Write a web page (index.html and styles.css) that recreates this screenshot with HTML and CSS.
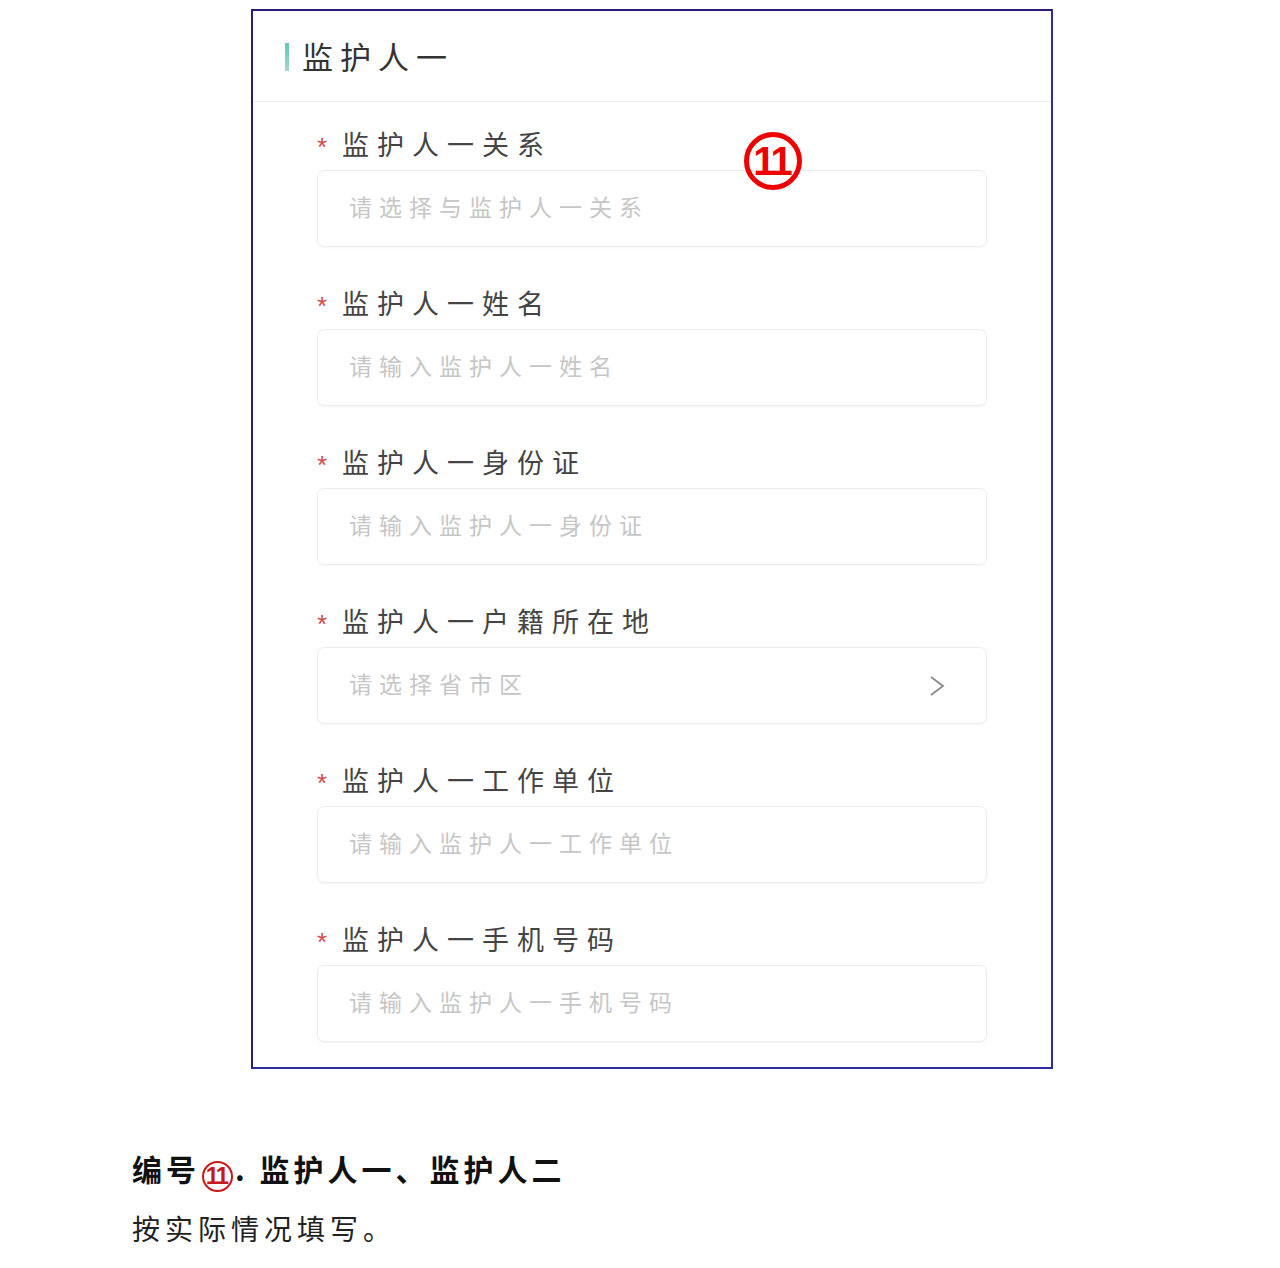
FILE: index.html
```html
<!DOCTYPE html>
<html lang="zh-CN">
<head>
  <meta charset="UTF-8">
  <meta name="viewport" content="width=device-width, initial-scale=1.0">
  <title>监护人一</title>
  <link rel="stylesheet" href="styles.css">
</head>
<body>
  <div class="frame">
    <div class="panel-head">
      <span class="bar"></span>
      <h2>监护人一</h2>
    </div>
    <span class="mark">11</span>
    <form class="fields">
      <div class="field">
        <label><i>*</i>监护人一关系</label>
        <div class="box">请选择与监护人一关系</div>
      </div>
      <div class="field">
        <label><i>*</i>监护人一姓名</label>
        <div class="box">请输入监护人一姓名</div>
      </div>
      <div class="field">
        <label><i>*</i>监护人一身份证</label>
        <div class="box">请输入监护人一身份证</div>
      </div>
      <div class="field">
        <label><i>*</i>监护人一户籍所在地</label>
        <div class="box picker">
          <span>请选择省市区</span>
          <svg width="18" height="22" viewBox="0 0 18 22"><path d="M3 2 L15 11 L3 20" fill="none" stroke="#8a8a8a" stroke-width="1.8"/></svg>
        </div>
      </div>
      <div class="field">
        <label><i>*</i>监护人一工作单位</label>
        <div class="box">请输入监护人一工作单位</div>
      </div>
      <div class="field">
        <label><i>*</i>监护人一手机号码</label>
        <div class="box">请输入监护人一手机号码</div>
      </div>
    </form>
  </div>

  <div class="note">
    <p class="note-title">编号<span class="num">11</span>. 监护人一、监护人二</p>
    <p class="note-text">按实际情况填写。</p>
  </div>
</body>
</html>
```

FILE: styles.css
```css
body {
  margin: 0; padding: 9px 0 0;
  background: #fff;
  font-family: "Noto Sans CJK SC", "Noto Sans", sans-serif;
}
.frame {
  position: relative;
  box-sizing: border-box;
  width: 802px; margin-left: 251px;
  border: 2px solid #2d2aa3;
  border-top-color: #261d7a; border-left-color: #261d7a;
}
.panel-head {
  display: flex; align-items: center;
  height: 90px; padding-left: 32px;
  border-bottom: 1px solid #f0f0f0;
}
.bar {
  width: 4px; height: 28px; margin-right: 13px; margin-top: 2px;
  background: linear-gradient(#5fc9bb, #9fd9cf);
}
.panel-head h2 {
  margin: -2px 0 0; font-size: 31px; font-weight: 400; color: #333;
  letter-spacing: 7px;
}
.mark {
  position: absolute; left: 491px; top: 121px;
  width: 48px; height: 48px; border: 5px solid #e00;
  border-radius: 50%;
  display: flex; align-items: center; justify-content: center;
  color: #e00; font-family: "Liberation Sans", sans-serif;
  font-size: 40px; font-weight: 700; letter-spacing: -3px;
  text-indent: -3px;
}
.fields {
  display: flex; flex-direction: column; gap: 40px;
  padding: 26px 64px 25px;
}
.field { display: flex; flex-direction: column; gap: 12px; }
.field label {
  display: flex; align-items: center;
  height: 30px; font-size: 27px; color: #444; letter-spacing: 8px;
}
.field label i {
  font-style: normal; color: #d24a4a; font-size: 26px;
  letter-spacing: 0; width: 25px; margin-top: 8px;
  font-family: "Liberation Sans", sans-serif;
}
.box {
  box-sizing: border-box; height: 77px;
  display: flex; align-items: center; justify-content: space-between;
  padding: 0 40px 6px 31px;
  border: 1px solid #ececec; border-radius: 7px;
  box-shadow: 0 1px 2px rgba(0, 0, 0, 0.04);
  font-size: 23px; color: #c6c6c6; letter-spacing: 7px;
}
.picker svg { margin-top: 6px; }
.note { padding: 69px 0 0 132px; }
.note p { margin: 0; line-height: 60px; }
.note-title {
  font-size: 30px; font-weight: 700; color: #111; letter-spacing: 4px;
}
.num {
  display: inline-flex; align-items: center; justify-content: center;
  box-sizing: border-box; width: 31px; height: 31px; margin: 0 2px;
  border: 2px solid #c81818; border-radius: 50%;
  color: #c81818; font-family: "Liberation Sans", sans-serif;
  font-size: 24px; letter-spacing: -2px; text-indent: -2px;
  vertical-align: -3px;
}
.note-text { font-size: 28px; color: #222; letter-spacing: 5px; }
```
